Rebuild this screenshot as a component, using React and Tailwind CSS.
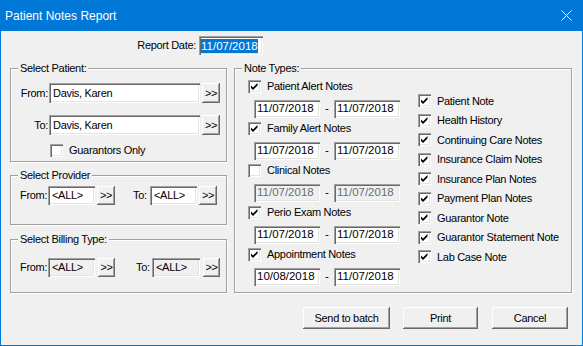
import React from 'react'

const sunken =
  'shadow-[inset_1px_1px_0_#a0a0a0,inset_2px_2px_0_#696969,inset_-1px_-1px_0_#fff,inset_-2px_-2px_0_#e3e3e3]'
const raised =
  'shadow-[inset_-1px_-1px_0_#696969,inset_1px_1px_0_#fff,inset_-2px_-2px_0_#a0a0a0]'

const Field = ({ className = '', children }) => (
  <div className={`flex items-center pl-[4px] whitespace-nowrap overflow-hidden ${sunken} ${className}`}>
    {children}
  </div>
)

const ArrowBtn = ({ className = '' }) => (
  <div className={`flex items-center justify-center bg-[#f0f0f0] ${raised} ${className}`}>
    &gt;&gt;
  </div>
)

const Check = ({ checked }) => (
  <span className={`block shrink-0 w-[13px] h-[13px] bg-white ${sunken}`}>
    {checked && (
      <svg width="13" height="13" viewBox="0 0 13 13">
        <polygon points="3,5.5 5,7.5 9.5,3 9.5,5.5 5,10 3,8" fill="#000" />
      </svg>
    )}
  </span>
)

const Group = ({ title, className = '', children }) => (
  <fieldset className={`border border-[#a0a0a0] shadow-[inset_1px_1px_0_#fff,1px_1px_0_#fff] ${className}`}>
    <legend className="ml-[7px] px-[2px] leading-[13px] bg-[#f0f0f0]">{title}</legend>
    {children}
  </fieldset>
)

const noteTypes = [
  { label: 'Patient Alert Notes', checked: true, from: '11/07/2018', to: '11/07/2018' },
  { label: 'Family Alert Notes', checked: true, from: '11/07/2018', to: '11/07/2018' },
  { label: 'Clinical Notes', checked: false, from: '11/07/2018', to: '11/07/2018' },
  { label: 'Perio Exam Notes', checked: true, from: '11/07/2018', to: '11/07/2018' },
  { label: 'Appointment Notes', checked: true, from: '10/08/2018', to: '11/07/2018' },
]

const otherNotes = [
  'Patient Note',
  'Health History',
  'Continuing Care Notes',
  'Insurance Claim Notes',
  'Insurance Plan Notes',
  'Payment Plan Notes',
  'Guarantor Note',
  'Guarantor Statement Note',
  'Lab Case Note',
]

export default function App() {
  return (
    <div className="w-[583px] h-[346px] flex flex-col bg-[#f0f0f0] border-x border-b border-[#0078d7] text-black text-[11px] tracking-[-0.3px] font-['Liberation_Sans',Arial,sans-serif] overflow-hidden">
      {/* Title bar */}
      <div className="-mx-px h-[31px] shrink-0 flex items-center justify-between bg-[#0078d7] text-white pl-[5px] pr-[11px] tracking-normal">
        <span className="text-[12px]">Patient Notes Report</span>
        <svg width="11" height="11" viewBox="0 0 11 11">
          <path d="M0.5 0.5 L10.5 10.5 M10.5 0.5 L0.5 10.5" stroke="#fff" strokeWidth="1" />
        </svg>
      </div>

      {/* Report date */}
      <div className="mt-[5px] flex items-center">
        <div className="w-[195px] text-right">Report Date:</div>
        <Field className="ml-[3px] w-[64px] h-[19px] bg-white text-[11.5px] tracking-normal !pl-[2px]">
          <span className="bg-[#0078d7] text-white leading-[14px]">11/07/2018</span>
        </Field>
      </div>

      {/* Main */}
      <div className="mt-[7px] flex pl-[9px] gap-[7px]">
        <div className="w-[217px] flex flex-col">
          <Group title="Select Patient:" className="h-[100px]">
            <div className="pt-[8px] pl-[9px] flex flex-col gap-[12px]">
              <div className="flex items-center">
                <span className="w-[28px] text-right">From:</span>
                <Field className="ml-px w-[151px] h-[20px] bg-white">Davis, Karen</Field>
                <ArrowBtn className="ml-[2px] w-[18px] h-[20px]" />
              </div>
              <div className="flex items-center">
                <span className="w-[28px] text-right">To:</span>
                <Field className="ml-px w-[151px] h-[20px] bg-white">Davis, Karen</Field>
                <ArrowBtn className="ml-[2px] w-[18px] h-[20px]" />
              </div>
              <div className="-mt-[5px] flex items-center pl-[30px] gap-[6px]">
                <Check />
                <span>Guarantors Only</span>
              </div>
            </div>
          </Group>

          <Group title="Select Provider" className="mt-[7px] h-[56px]">
            <div className="pt-[4px] pl-[9px] flex items-center whitespace-nowrap">
              <span className="w-[28px]">From:</span>
              <Field className="w-[47px] h-[19px] bg-white">&lt;ALL&gt;</Field>
              <ArrowBtn className="ml-[2px] w-[18px] h-[19px]" />
              <span className="ml-[18px] w-[17px]">To:</span>
              <Field className="w-[47px] h-[19px] bg-white">&lt;ALL&gt;</Field>
              <ArrowBtn className="ml-[2px] w-[18px] h-[19px]" />
            </div>
          </Group>

          <Group title="Select Billing Type:" className="mt-[8px] h-[60px]">
            <div className="pt-[12px] pl-[9px] flex items-center whitespace-nowrap">
              <span className="w-[28px]">From:</span>
              <Field className="w-[47px] h-[19px] bg-[#f0f0f0]">&lt;ALL&gt;</Field>
              <ArrowBtn className="ml-[3px] w-[17px] h-[19px]" />
              <span className="ml-[21px] w-[16px]">To:</span>
              <Field className="w-[48px] h-[19px] bg-[#f0f0f0]">&lt;ALL&gt;</Field>
              <ArrowBtn className="ml-[3px] w-[17px] h-[19px]" />
            </div>
          </Group>
        </div>

        <Group title="Note Types:" className="w-[338px] h-[231px]">
          <div className="pt-[5px] pl-[13px] flex">
            <div className="flex flex-col w-[152px]">
              {noteTypes.map((n, i) => (
                <div key={n.label} className={i > 0 ? 'mt-[4px]' : ''}>
                  <div className="h-[13px] flex items-center gap-[6px] whitespace-nowrap">
                    <Check checked={n.checked} />
                    <span>{n.label}</span>
                  </div>
                  <div className="mt-[7px] ml-[6px] flex items-center text-[11.5px] tracking-normal">
                    <Field className={`w-[66px] h-[18px] !pl-[3px] ${n.checked ? 'bg-white' : 'bg-[#f0f0f0] text-[#6d6d6d]'}`}>
                      {n.from}
                    </Field>
                    <span className="w-[14px] text-center">-</span>
                    <Field className={`w-[66px] h-[18px] !pl-[3px] ${n.checked ? 'bg-white' : 'bg-[#f0f0f0] text-[#6d6d6d]'}`}>
                      {n.to}
                    </Field>
                  </div>
                </div>
              ))}
            </div>
            <div className="ml-[18px] mt-[11px] flex flex-col">
              {otherNotes.map((label) => (
                <div key={label} className="h-[19.5px] flex items-center gap-[6px] whitespace-nowrap">
                  <Check checked />
                  <span>{label}</span>
                </div>
              ))}
            </div>
          </div>
        </Group>
      </div>

      {/* Buttons */}
      <div className="mt-[14px] flex justify-end pr-[14px]">
        <button className={`w-[87px] h-[22px] bg-[#f0f0f0] ${raised}`}>Send to batch</button>
        <button className={`ml-[13px] w-[75px] h-[22px] bg-[#f0f0f0] ${raised}`}>Print</button>
        <button className={`ml-[14px] w-[76px] h-[22px] bg-[#f0f0f0] ${raised}`}>Cancel</button>
      </div>
    </div>
  )
}
